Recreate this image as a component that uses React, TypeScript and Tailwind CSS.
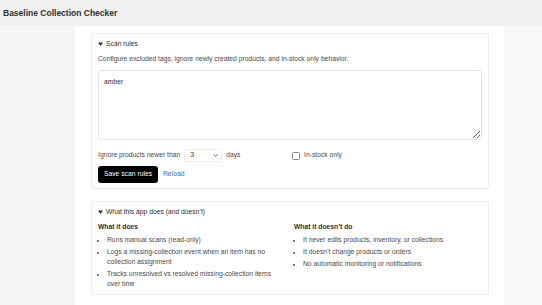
import { ChevronDown } from 'lucide-react'

const DOES = [
  'Runs manual scans (read-only)',
  'Logs a missing-collection event when an item has no collection assignment',
  'Tracks unresolved vs resolved missing-collection items over time',
]

const DOESNT = [
  'It never edits products, inventory, or collections',
  'It doesn\u2019t change products or orders',
  'No automatic monitoring or notifications',
]

function Caret() {
  return (
    <svg width="5" height="4" viewBox="0 0 5 4" className="mr-[3px] inline-block">
      <path d="M0 0.5 L5 0.5 L2.5 4 Z" fill="#303030" />
    </svg>
  )
}

function BulletList({ items }: { items: string[] }) {
  return (
    <ul className="mt-[3px] flex list-disc flex-col gap-[2px] pl-[9px] text-[#4a4a4a] marker:text-[5px]">
      {items.map((t) => (
        <li key={t} className="leading-[10px]">
          {t}
        </li>
      ))}
    </ul>
  )
}

export default function App() {
  return (
    <div
      className="flex h-[305px] w-[542px] flex-col overflow-hidden bg-[#f1f1f1] text-[6.75px] text-[#303030]"
      style={{ fontFamily: '"Liberation Sans", Arial, sans-serif' }}
    >
      <header className="flex h-[26px] shrink-0 items-center bg-[#f1f1f1] pl-[3px]">
        <h1 className="text-[8.5px] font-bold text-[#303030]">Baseline Collection Checker</h1>
      </header>

      <div className="flex flex-1">
        <aside className="w-[75px] bg-[#f5f5f5]" />

        <main className="flex w-[430px] flex-col gap-[12px] bg-white px-[16px] pt-[7px]">
          {/* Scan rules */}
          <section className="rounded-[3px] border border-[#ececec] px-[6px] pb-[5px] pt-[5px]">
            <div className="flex items-center leading-[10px]">
              <Caret />
              Scan rules
            </div>
            <p className="mt-[5px] leading-[10px] text-[#4a4a4a]">
              Configure excluded tags, ignore newly created products, and in-stock only behavior.
            </p>
            <textarea
              defaultValue="amber"
              className="mt-[6px] block h-[70px] w-full rounded-[3px] border border-[#e3e3e3] px-[5px] pt-[6px] text-[6.75px] leading-[10px] text-[#303030] outline-none"
              style={{ fontFamily: '"Liberation Sans", Arial, sans-serif' }}
            />
            <div className="mt-[9px] grid grid-cols-2 gap-[4px]">
              <div className="flex h-[13px] items-center text-[#4a4a4a]">
                <span>Ignore products newer than</span>
                <div className="ml-[4px] flex h-[13px] w-[38px] items-center justify-between rounded-[2px] border border-[#eeeeee] pl-[5px] pr-[2px] text-[#303030]">
                  <span>3</span>
                  <ChevronDown size={7} strokeWidth={2.5} color="#303030" />
                </div>
                <span className="ml-[4px]">days</span>
              </div>
              <label className="flex h-[13px] items-center text-[#4a4a4a]">
                <span className="mr-[4px] h-[8px] w-[8px] rounded-[1.5px] border border-[#8a8a8a] bg-white" />
                In-stock only
              </label>
            </div>
            <div className="mt-[4px] flex items-center">
              <button className="h-[17px] w-[60px] rounded-[3px] bg-black text-[6.75px] text-white">
                Save scan rules
              </button>
              <span className="ml-[5px] text-[#2c6ecb]">Reload</span>
            </div>
          </section>

          {/* What this app does */}
          <section className="rounded-[3px] border border-[#ececec] px-[6px] pb-[5px] pt-[5px]">
            <div className="flex items-center leading-[10px]">
              <Caret />
              What this app does (and doesn&rsquo;t)
            </div>
            <div className="mt-[5px] grid grid-cols-2 gap-[8px]">
              <div>
                <h3 className="font-bold leading-[10px]">What it does</h3>
                <BulletList items={DOES} />
              </div>
              <div>
                <h3 className="font-bold leading-[10px]">What it doesn&rsquo;t do</h3>
                <BulletList items={DOESNT} />
              </div>
            </div>
          </section>
        </main>

        <aside className="flex-1 border-l border-[#f0f0f0] bg-[#f8f9fb]" />
      </div>
    </div>
  )
}
